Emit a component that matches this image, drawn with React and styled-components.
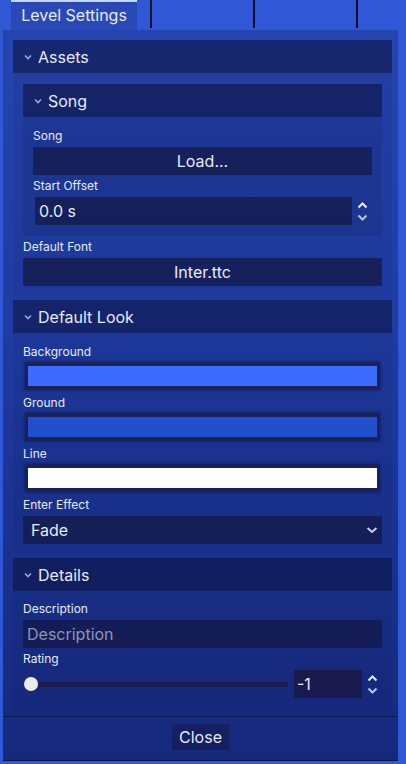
import React from "react";
import styled, { createGlobalStyle } from "styled-components";

const GlobalStyle = createGlobalStyle`
  html, body {
    margin: 0;
    padding: 0;
    background: #3057d6;
  }
  body {
    font-family: Inter, "Noto Sans", sans-serif;
    color: #e6eaf6;
  }
`;

const Screen = styled.div`
  width: 406px;
  height: 764px;
  display: flex;
  flex-direction: column;
  background: #3057d6;
  overflow: hidden;
`;

const TabBar = styled.div`
  display: flex;
  height: 30px;
  flex: none;
  padding-left: 11px;
`;

const Tab = styled.div`
  width: 126px;
  box-sizing: border-box;
  border-top: 2px solid #c7d6ff;
  background: #2a49b6;
  font-size: 16px;
  display: flex;
  align-items: center;
  justify-content: center;
  padding-bottom: 2px;
`;

const TabSlot = styled.div`
  width: ${(p) => p.$w}px;
  height: 28px;
  border-right: 2px solid #0b0f24;
`;

const Window = styled.div`
  flex: 1;
  margin: 0 8px 3px 3px;
  display: flex;
  flex-direction: column;
  background: linear-gradient(180deg, #2545ae 0%, #1f3ca2 40%, #15297c 100%);
  border-bottom: 1px solid #0c143a;
`;

const Body = styled.div`
  display: flex;
  flex-direction: column;
  gap: 5px;
  padding: 10px 6px 0 10px;
`;

const Section = styled.div`
  display: flex;
  flex-direction: column;
  background: rgba(10, 18, 60, ${(p) => (p.$inner ? 0.12 : 0.08)});
`;

const Header = styled.div`
  height: 33px;
  display: flex;
  align-items: center;
  gap: 4px;
  padding-left: 9px;
  background: rgba(10, 16, 58, 0.5);
  font-size: 16px;
`;

const Content = styled.div`
  display: flex;
  flex-direction: column;
  gap: 3px;
  padding: ${(p) => p.$pad || "10px"};
`;

const Field = styled.div`
  display: flex;
  flex-direction: column;
  gap: 3px;
`;

const Label = styled.div`
  font-size: 12px;
  line-height: 16px;
`;

const Control = styled.div`
  height: 28px;
  box-sizing: border-box;
  display: flex;
  align-items: center;
  background: rgba(20, 24, 68, 0.72);
  font-size: 16px;
  justify-content: ${(p) => (p.$center ? "center" : "flex-start")};
  padding: 0 ${(p) => (p.$center ? 0 : 4)}px;
  color: ${(p) => (p.$muted ? "#8d95b8" : "#e6eaf6")};
`;

const SelectBox = styled(Control)`
  justify-content: space-between;
  padding: 0 3px 0 8px;
`;

const Swatch = styled.div`
  height: 28px;
  box-sizing: border-box;
  margin: -1px 2px 2px;
  border: 4px solid #1a2158;
  border-left-width: 3px;
  border-right-width: 3px;
  background: ${(p) => p.$color};
  box-shadow: 0 0 3px rgba(6, 10, 40, 0.6);
`;

const Row = styled.div`
  display: flex;
  align-items: center;
`;

const OffsetBox = styled(Control)`
  flex: 1;
  margin-left: 2px;
`;

const Spin = styled.div`
  width: 20px;
  display: flex;
  flex-direction: column;
  align-items: center;
  gap: 5px;
`;

const Slider = styled.div`
  flex: 1;
  height: 28px;
  display: flex;
  align-items: center;
  padding-left: 1px;
  margin-right: 6px;
`;

const Thumb = styled.div`
  width: 14px;
  height: 14px;
  border-radius: 50%;
  background: #ecebe6;
  flex: none;
`;

const Track = styled.div`
  flex: 1;
  height: 5px;
  background: rgba(30, 24, 70, 0.8);
`;

const NumberBox = styled(Control)`
  width: 68px;
  flex: none;
  padding-left: 3px;
  background: rgba(28, 22, 66, 0.78);
`;

const Footer = styled.div`
  margin-top: auto;
  border-top: 1px solid rgba(10, 16, 50, 0.6);
  display: flex;
  justify-content: center;
  padding: 7px 0 10px;
`;

const CloseButton = styled.div`
  height: 26px;
  padding: 0 7px;
  display: flex;
  align-items: center;
  font-size: 16px;
  background: rgba(22, 22, 72, 0.55);
`;

const Chevron = () => (
  <svg width="12" height="10" viewBox="0 0 12 10">
    <polyline points="3,3.5 6,6.5 9,3.5" fill="none" stroke="#9aa9d6" strokeWidth="1.6" />
  </svg>
);

const Arrow = ({ up }) => (
  <svg width="11" height="7" viewBox="0 0 11 7">
    <polyline
      points={up ? "1.5,5.5 5.5,1.5 9.5,5.5" : "1.5,1.5 5.5,5.5 9.5,1.5"}
      fill="none"
      stroke={up ? "#e9edf8" : "#b8c3e6"}
      strokeWidth="2"
    />
  </svg>
);

const Spinner = () => (
  <Spin>
    <Arrow up />
    <Arrow />
  </Spin>
);

const SelectArrow = () => (
  <svg width="14" height="10" viewBox="0 0 14 10">
    <polyline points="2.5,3 7,7 11.5,3" fill="none" stroke="#c7d0ea" strokeWidth="2" />
  </svg>
);

const Collapsible = ({ title, inner, pad, children }) => (
  <Section $inner={inner}>
    <Header>
      <Chevron />
      {title}
    </Header>
    <Content $pad={pad}>{children}</Content>
  </Section>
);

export default function App() {
  return (
    <Screen>
      <GlobalStyle />
      <TabBar>
        <Tab>Level Settings</Tab>
        <TabSlot $w={13} />
        <TabSlot $w={101} />
        <TabSlot $w={101} />
      </TabBar>
      <Window>
        <Body>
          <Collapsible title="Assets" pad="11px 10px 9px 10px">
            <Collapsible title="Song" inner pad="11px 10px 11px 10px">
              <Field>
                <Label>Song</Label>
                <Control $center>Load...</Control>
              </Field>
              <Field>
                <Label>Start Offset</Label>
                <Row>
                  <OffsetBox>0.0 s</OffsetBox>
                  <Spinner />
                </Row>
              </Field>
            </Collapsible>
            <Field>
              <Label>Default Font</Label>
              <Control $center>Inter.ttc</Control>
            </Field>
          </Collapsible>

          <Collapsible title="Default Look" pad="11px 10px 9px 10px">
            <Field>
              <Label>Background</Label>
              <Swatch $color="#3c6bfd" />
            </Field>
            <Field>
              <Label>Ground</Label>
              <Swatch $color="#224fce" />
            </Field>
            <Field>
              <Label>Line</Label>
              <Swatch $color="#ffffff" />
            </Field>
            <Field>
              <Label>Enter Effect</Label>
              <SelectBox>
                Fade
                <SelectArrow />
              </SelectBox>
            </Field>
          </Collapsible>

          <Collapsible title="Details" pad="10px 10px 14px 10px">
            <Field>
              <Label>Description</Label>
              <Control $muted>Description</Control>
            </Field>
            <Field>
              <Label>Rating</Label>
              <Row>
                <Slider>
                  <Thumb />
                  <Track />
                </Slider>
                <NumberBox>-1</NumberBox>
                <Spinner />
              </Row>
            </Field>
          </Collapsible>
        </Body>
        <Footer>
          <CloseButton>Close</CloseButton>
        </Footer>
      </Window>
    </Screen>
  );
}
